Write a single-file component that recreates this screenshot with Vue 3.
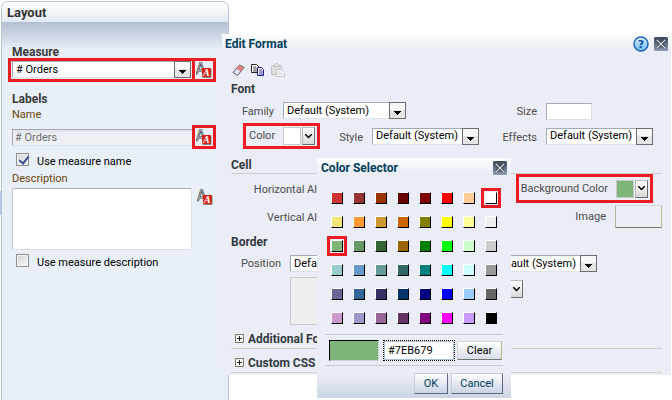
<script setup>
import { ref } from 'vue'

const measure = ref('# Orders')
const labelName = ref('# Orders')
const useName = ref(true)
const useDescription = ref(false)
const description = ref('')
const hex = ref('#7EB679')

const palette = [
  '#cc3333', '#993333', '#993300', '#660000', '#800000', '#ff0000', '#ffcc99', '#ffffff',
  '#f0e678', '#ff9933', '#cc9933', '#cc6600', '#808000', '#ffff00', '#ffff99', '#eeeeee',
  '#7eb679', '#669966', '#336633', '#996600', '#008000', '#00ff00', '#ccffcc', '#cccccc',
  '#99cccc', '#6699cc', '#669999', '#336666', '#008080', '#00ffff', '#ccffff', '#999999',
  '#666699', '#336699', '#333366', '#003366', '#000080', '#0000ff', '#99ccff', '#666666',
  '#cc99cc', '#9999cc', '#996699', '#663366', '#800080', '#ff00ff', '#cc99ff', '#000000',
]
const marked = ['#ffffff', '#7eb679']
</script>

<template>
  <div class="page">
    <svg class="defs" aria-hidden="true">
      <defs>
        <linearGradient id="closeFill" x1="0" y1="0" x2="0" y2="1">
          <stop offset="0" stop-color="#3c4458" />
          <stop offset="1" stop-color="#8f9cb5" />
        </linearGradient>
        <linearGradient id="helpFill" x1="0" y1="0" x2="0" y2="1">
          <stop offset="0" stop-color="#dff1ff" />
          <stop offset="1" stop-color="#67b9f5" />
        </linearGradient>
        <symbol id="arrow" viewBox="0 0 17 17">
          <rect x="0.5" y="0.5" width="16" height="16" fill="#e4e5e5" stroke="#6d6d6d" />
          <path d="M1 1h15v7H1z" fill="#f7f7f7" />
          <path d="M5 9h7v1h-1v1h-1v1H9v1H8v-1H7v-1H6v-1H5z" fill="#000" />
        </symbol>
        <symbol id="format" viewBox="0 0 16 16">
          <text x="0" y="12" class="glyph-back">A</text>
          <rect x="6" y="6" width="9" height="9" rx="1" fill="#d81e10" />
          <path d="M6.500 15.500h8.500v-9" fill="none" stroke="#6d6a6a" stroke-width="0.800" />
          <text x="7" y="14" class="glyph-front">A</text>
        </symbol>
        <symbol id="close" viewBox="0 0 14 14">
          <rect width="14" height="14" rx="1.500" fill="url(#closeFill)" />
          <path d="M3.500 3.500l7 7M10.500 3.500l-7 7" stroke="#1d2433" stroke-width="3" />
          <path d="M3 3l8 8M11 3l-8 8" stroke="#dcdcdc" stroke-width="1.400" />
        </symbol>
      </defs>
    </svg>

    <section class="panel">
      <h1 class="panel-title">Layout</h1>
      <div class="panel-body">
        <label class="group-title" for="measure">Measure</label>
        <div class="measure-row">
          <div class="mark measure-mark">
            <div class="select">
              <select id="measure" v-model="measure"><option># Orders</option></select>
              <svg class="arrow"><use href="#arrow" /></svg>
            </div>
          </div>
          <button class="icon-btn mark" aria-label="Format measure">
            <svg width="16" height="16"><use href="#format" /></svg>
          </button>
        </div>

        <h2 class="group-title labels-title">Labels</h2>
        <label class="field-title" for="name">Name</label>
        <div class="name-row">
          <input id="name" v-model="labelName" class="text name-input" disabled />
          <button class="icon-btn mark" aria-label="Format name">
            <svg width="16" height="16"><use href="#format" /></svg>
          </button>
        </div>
        <label class="check"><input v-model="useName" type="checkbox" />Use measure name</label>
        <label class="field-title" for="desc">Description</label>
        <div class="desc-row">
          <textarea id="desc" v-model="description"></textarea>
          <button class="icon-btn" aria-label="Format description">
            <svg width="16" height="16"><use href="#format" /></svg>
          </button>
        </div>
        <label class="check"><input v-model="useDescription" type="checkbox" />Use measure description</label>
      </div>
    </section>
    <div class="splitter"></div>

    <section class="dialog edit">
      <header class="dialog-head">
        <h2>Edit Format</h2>
        <button class="plain" aria-label="Help">
          <svg width="16" height="16" viewBox="0 0 16 16">
            <circle cx="8" cy="8" r="7" fill="url(#helpFill)" stroke="#2267b5" stroke-width="1.500" />
            <text x="8" y="12" text-anchor="middle" class="help-glyph">?</text>
          </svg>
        </button>
        <button class="plain" aria-label="Close">
          <svg width="14" height="14"><use href="#close" /></svg>
        </button>
      </header>

      <div class="tools">
        <button class="plain" aria-label="Clear format">
          <svg width="13" height="14" viewBox="0 0 13 14">
            <path d="M1 9.500L7.500 2l4.500 2.500L5.500 12.500z" fill="#dfe3fb" stroke="#55504f" />
            <path d="M4.500 5.500L7.500 2.500l4 2-3 4z" fill="#e88078" />
          </svg>
        </button>
        <button class="plain" aria-label="Copy format">
          <svg width="14" height="14" viewBox="0 0 14 14">
            <path d="M.5 1.500h5l2 2v6h-7z" fill="#fff" stroke="#24222b" />
            <path d="M2 4h3M2 6h4M2 8h4" stroke="#444" />
            <path d="M6.500 4.500h4l2 2v6h-6z" fill="#fff" stroke="#20208a" />
            <path d="M8 7h3M8 9h4M8 11h4" stroke="#333399" />
          </svg>
        </button>
        <button class="plain" aria-label="Paste format" disabled>
          <svg width="14" height="14" viewBox="0 0 14 14">
            <path d="M.5 2.500h10v9H.5z" fill="#deddda" stroke="#c3c2c2" />
            <path d="M3 3.500V2h1.500L5 .5h1.500L7 2h1.500v1.500z" fill="#efefef" stroke="#bfbfbf" />
            <path d="M5.500 6.500h5l3 3v4h-8z" fill="#f5f6fb" stroke="#c8c9cf" />
            <path d="M7 9h3M7 11h5" stroke="#d0d0d6" />
          </svg>
        </button>
      </div>

      <h3 class="section-title">Font</h3>
      <div class="font-grid">
        <label for="family">Family</label>
        <div class="select family">
          <select id="family"><option>Default (System)</option></select>
          <svg class="arrow"><use href="#arrow" /></svg>
        </div>
        <label for="size">Size</label>
        <input id="size" class="text size" />

        <div class="mark color-mark">
          <span>Color</span>
          <span class="picker">
            <span class="chip white"></span>
            <button class="drop" aria-label="Choose color">
              <svg width="7" height="5" viewBox="0 0 7 5"><path d="M0 0l3.500 3.500L7 0" /></svg>
            </button>
          </span>
        </div>
        <label for="style">Style</label>
        <div class="select">
          <select id="style"><option>Default (System)</option></select>
          <svg class="arrow"><use href="#arrow" /></svg>
        </div>
        <label for="effects">Effects</label>
        <div class="select effects">
          <select id="effects"><option>Default (System)</option></select>
          <svg class="arrow"><use href="#arrow" /></svg>
        </div>
      </div>

      <h3 class="section-title ruled cell-title">Cell</h3>
      <div class="cell-grid">
        <span class="cell-label">Horizontal Alignment</span>
        <div class="mark back-mark">
          <span>Background Color</span>
          <span class="picker">
            <span class="chip green"></span>
            <button class="drop" aria-label="Choose background color">
              <svg width="7" height="5" viewBox="0 0 7 5"><path d="M0 0l3.500 3.500L7 0" /></svg>
            </button>
          </span>
        </div>
        <span class="cell-label">Vertical Alignment</span>
        <div class="image-field">
          <span>Image</span>
          <button class="image-btn" aria-label="Image"></button>
        </div>
      </div>

      <h3 class="section-title border-title">Border</h3>
      <div class="border-grid">
        <label for="position">Position</label>
        <div class="select position">
          <select id="position"><option>Default (System)</option></select>
          <svg class="arrow"><use href="#arrow" /></svg>
        </div>
        <div class="select border-style">
          <select aria-label="Border style"><option>Default (System)</option></select>
          <svg class="arrow"><use href="#arrow" /></svg>
        </div>
        <div class="preview"></div>
        <span class="picker border-color">
          <button class="drop" aria-label="Choose border color">
            <svg width="7" height="5" viewBox="0 0 7 5"><path d="M0 0l3.500 3.500L7 0" /></svg>
          </button>
        </span>
      </div>

      <button class="fold">
        <svg width="9" height="9" viewBox="0 0 9 9"><path d="M.5.5h8v8h-8z" /><path class="plus" d="M2 4.500h5M4.500 2v5" /></svg>
        Additional Formatting Options
      </button>
      <button class="fold">
        <svg width="9" height="9" viewBox="0 0 9 9"><path d="M.5.5h8v8h-8z" /><path class="plus" d="M2 4.500h5M4.500 2v5" /></svg>
        Custom CSS Style Options
      </button>
    </section>

    <section class="dialog chooser">
      <header class="dialog-head">
        <h2>Color Selector</h2>
        <button class="plain" aria-label="Close">
          <svg width="14" height="14"><use href="#close" /></svg>
        </button>
      </header>
      <div class="swatches">
        <button
          v-for="c in palette"
          :key="c"
          class="swatch"
          :class="{ marked: marked.includes(c) }"
          :style="{ backgroundColor: c }"
          :aria-label="c"
          @click="hex = c.toUpperCase()"
        ></button>
      </div>
      <div class="entry">
        <span class="sample"></span>
        <input v-model="hex" aria-label="Color value" />
        <button class="clear" @click="hex = ''">Clear</button>
      </div>
      <footer>
        <button>OK</button>
        <button>Cancel</button>
      </footer>
    </section>
  </div>
</template>

<style>
body {
  background: #fff;
}
</style>

<style scoped>
.page,
.page * {
  box-sizing: border-box;
}
.page {
  position: relative;
  display: flex;
  min-height: 100vh;
  padding: 1px 0 0 1px;
  overflow: hidden;
  font: 11px/14px Roboto, "DejaVu Sans Condensed", sans-serif;
  color: #000;
}
.defs {
  position: absolute;
  width: 0;
  height: 0;
}
h1,
h2,
h3 {
  margin: 0;
}
button,
input,
select,
textarea {
  font: inherit;
  color: inherit;
  margin: 0;
  padding: 0;
  border-radius: 0;
}
.plain {
  display: flex;
  border: 0;
  background: none;
}
.mark {
  border: 3px solid #ed1c24;
}

/* Layout panel */
.panel {
  width: 228px;
  border: 1px solid #b8c2d5;
  border-bottom: 0;
  border-radius: 7px 7px 0 0;
  background: #e8eff7;
  overflow: hidden;
}
.panel-title {
  height: 20px;
  padding-left: 5px;
  background: linear-gradient(#fff, #e3e9f3);
  font-size: 13px;
  line-height: 22px;
  color: #333;
}
.panel-body {
  padding: 24px 12px 0 10px;
  background: linear-gradient(#b3bed1, #e8eff7 28px);
}
.group-title {
  display: block;
  font-size: 12px;
  font-weight: bold;
  line-height: 12px;
  color: #3b3b3b;
}
.labels-title {
  margin: 11px 0 3px;
}
.measure-row {
  display: flex;
  margin-left: -4px;
}
.measure-mark {
  flex: 1;
  padding: 0 1px;
}
.icon-btn {
  display: flex;
  flex: none;
  align-items: center;
  justify-content: center;
  width: 24px;
  height: 24px;
  margin-left: -3px;
  background: none;
}
.icon-btn:not(.mark) {
  width: 16px;
  height: 16px;
  margin: 1px 3px 0 5px;
  border: 0;
}
.glyph-back {
  font: 15px "DejaVu Sans Condensed", sans-serif;
  fill: #ddd;
  stroke: #3e3e3e;
  stroke-width: 0.7px;
}
.glyph-front {
  font: italic bold 10px "Liberation Serif", serif;
  fill: #fff;
}
.help-glyph {
  font: bold 11px "DejaVu Sans", sans-serif;
  fill: #174f9c;
}
.field-title {
  display: block;
  color: #6b4408;
}
.name-row {
  display: flex;
  align-items: center;
  padding-top: 3px;
}
.text {
  height: 17px;
  border: 1px solid #d9dde4;
  border-top-color: #a3aab5;
  border-left-color: #a3aab5;
  background: #fff;
}
.name-input {
  flex: 1;
  min-width: 0;
  padding-left: 2px;
  background: linear-gradient(#dfe3e8, #edf1f5 5px);
  color: #6c6c6c;
}
.check {
  display: flex;
  align-items: flex-start;
  gap: 8px;
  height: 16px;
  margin: 4px 0 3px 4px;
  line-height: 18px;
}
.check input {
  appearance: none;
  width: 13px;
  height: 13px;
  border: 1px solid #8e8f8f;
  outline: 1px solid #f4f4f4;
  outline-offset: -2px;
  background: linear-gradient(135deg, #cfd2d6, #fafafa);
}
.check input:checked::before {
  content: "";
  display: block;
  width: 4px;
  height: 8px;
  margin: 0 0 0 4px;
  border: solid #3a4f96;
  border-width: 0 2px 2px 0;
  transform: rotate(38deg);
}
.desc-row {
  display: flex;
  padding-top: 2px;
}
textarea {
  flex: 1;
  min-width: 0;
  height: 62px;
  border: 1px solid #d9dde4;
  border-top-color: #a3aab5;
  border-left-color: #c0c5cd;
  border-radius: 2px;
  background: #fff;
  resize: none;
}
.splitter {
  position: absolute;
  left: 0;
  top: 191px;
  width: 2px;
  height: 24px;
  background: #b4c5e4;
}

/* Drop-downs */
.select {
  display: grid;
  min-width: 0;
  height: 18px;
}
.select > * {
  grid-area: 1 / 1;
}
.select select {
  appearance: none;
  width: 100%;
  min-width: 0;
  height: 17px;
  padding: 0 16px 0 3px;
  border: 1px solid #dfe2e8;
  border-top-color: #a3aab5;
  border-left-color: #a3aab5;
  background: #fff;
}
.arrow {
  justify-self: end;
  width: 17px;
  height: 17px;
  pointer-events: none;
}
.picker {
  display: flex;
  gap: 1px;
}
.chip {
  width: 18px;
  height: 18px;
  border: 1px solid #c9c9c9;
}
.white {
  background: #fff;
}
.green {
  background: #7eb679;
}
.drop {
  display: grid;
  place-items: center;
  width: 13px;
  height: 18px;
  border: 1px solid #b9b9b9;
  border-right-color: #6d6d6d;
  border-bottom-color: #6d6d6d;
  background: linear-gradient(#fff, #d7dad6);
}
.drop path {
  fill: none;
  stroke: #000;
  stroke-width: 1.5;
}

/* Windows */
.dialog {
  position: absolute;
  background: linear-gradient(#fbfdfe, #eaedf5 15px);
}
.dialog-head {
  display: flex;
  align-items: center;
}
.dialog-head h2 {
  flex: 1;
  font-size: 12px;
  line-height: 22px;
  color: #003d5b;
}
.edit {
  left: 222px;
  right: 1px;
  top: 34px;
  padding: 0 9px 2px;
  color: #4c4c4c;
}
.edit select {
  color: #000;
}
.edit .dialog-head {
  gap: 5px;
  height: 20px;
  margin: 0 -6px 0 -6px;
}
.tools {
  display: flex;
  gap: 6px;
  padding: 9px 0 0 1px;
}
.section-title {
  font-size: 12px;
  line-height: 16px;
  color: #333b40;
}
.tools + .section-title {
  margin-top: 4px;
}
.font-grid {
  display: grid;
  grid-template-columns: 43px 32px 39px 107px 49px 1fr;
  column-gap: 9px;
  align-items: center;
  padding-top: 5px;
}
.font-grid > label,
.border-grid > label {
  padding-top: 2px;
  text-align: right;
}
.family {
  grid-column: 2 / 5;
  width: 123px;
}
.size {
  width: 46px;
}
.effects {
  width: 107px;
}
.color-mark {
  display: flex;
  grid-column: 1 / 3;
  align-items: center;
  justify-content: space-between;
  height: 26px;
  margin: 3px -5px 4px 12px;
  padding: 0 2px 0 3px;
}
.cell-title {
  margin-top: 4px;
}
.ruled {
  border-bottom: 1px solid #cfcfc4;
}
.cell-grid {
  display: grid;
  grid-template-columns: 126px 1fr;
  row-gap: 2px;
  align-items: center;
}
.cell-label {
  justify-self: end;
  padding-top: 2px;
  white-space: nowrap;
}
.back-mark {
  display: flex;
  align-items: center;
  justify-self: end;
  gap: 8px;
  height: 29px;
  margin-right: 9px;
  padding: 0 2px;
}
.image-field {
  display: flex;
  align-items: center;
  justify-self: end;
  gap: 9px;
}
.image-btn {
  width: 47px;
  height: 23px;
  border: 1px solid #b5b99a;
  border-top-color: #d5d5d5;
  border-bottom-color: #74776b;
  background: #ebeef5;
}
.border-title {
  margin-top: 6px;
}
.border-grid {
  display: grid;
  grid-template-columns: 50px 123px 1fr;
  gap: 4px 9px;
  padding-top: 5px;
}
.border-style {
  width: 107px;
  margin-left: 68px;
}
.preview {
  grid-column: 2;
  height: 48px;
  border: 1px solid #c9c9c9;
  background: #eee;
}
.border-color {
  margin: 3px 0 0 88px;
}
.fold {
  display: flex;
  align-items: center;
  gap: 4px;
  width: 100%;
  height: 24px;
  padding: 4px 0 0 4px;
  border: 0;
  border-bottom: 1px solid #cfcfc4;
  background: none;
  font-size: 12px;
  font-weight: bold;
  color: #333b40;
}
.fold path {
  fill: #f8f8f2;
  stroke: #77776c;
}
.fold .plus {
  stroke: #222;
}

/* Colour chooser */
.chooser {
  left: 317px;
  top: 158px;
  width: 194px;
  padding: 0 8px 4px;
  background: linear-gradient(#fbfdfe, transparent 15px), linear-gradient(to top, #cdd5e4, #eaedf5 24px);
}
.chooser .dialog-head {
  height: 20px;
  margin: 0 -4px;
}
.swatches {
  display: grid;
  grid-template-columns: repeat(8, 12px);
  gap: 12px 10px;
  padding: 14px 6px 10px;
}
.swatch {
  width: 12px;
  height: 12px;
  border: 1px solid #fff;
  border-right-color: #000;
  border-bottom-color: #000;
}
.marked {
  outline: 3px solid #ed1c24;
  outline-offset: 1px;
}
.entry {
  display: flex;
  align-items: center;
  gap: 4px;
  padding: 5px 1px 4px 4px;
  border: solid #cacaca;
  border-width: 1px 0;
}
.sample {
  width: 50px;
  height: 21px;
  border: 1px solid #000;
  border-right-color: #d0d0d0;
  border-bottom-color: #d0d0d0;
  background: #7eb679;
}
.entry input {
  flex: 1;
  min-width: 0;
  height: 21px;
  padding-left: 4px;
  border: 1px dotted #000;
  background: #fff;
  box-shadow: inset 0 0 0 1px #a9c3dc;
}
.clear {
  width: 45px;
  height: 19px;
  margin-left: -2px;
  border: 1px solid #d5d5d5;
  border-right-color: #b4b98b;
  border-bottom-color: #74776b;
  background: linear-gradient(#fff, #d6ddeb);
}
footer {
  display: flex;
  justify-content: flex-end;
  gap: 3px;
  padding-top: 7px;
}
footer button {
  width: 34px;
  height: 21px;
  border: 1px solid #c5cbd6;
  border-right-color: #5d6980;
  border-bottom-color: #5d6980;
  background: linear-gradient(#fdfdfe, #cbd4e5);
  color: #003d5b;
}
footer button:last-child {
  width: 52px;
}
</style>
